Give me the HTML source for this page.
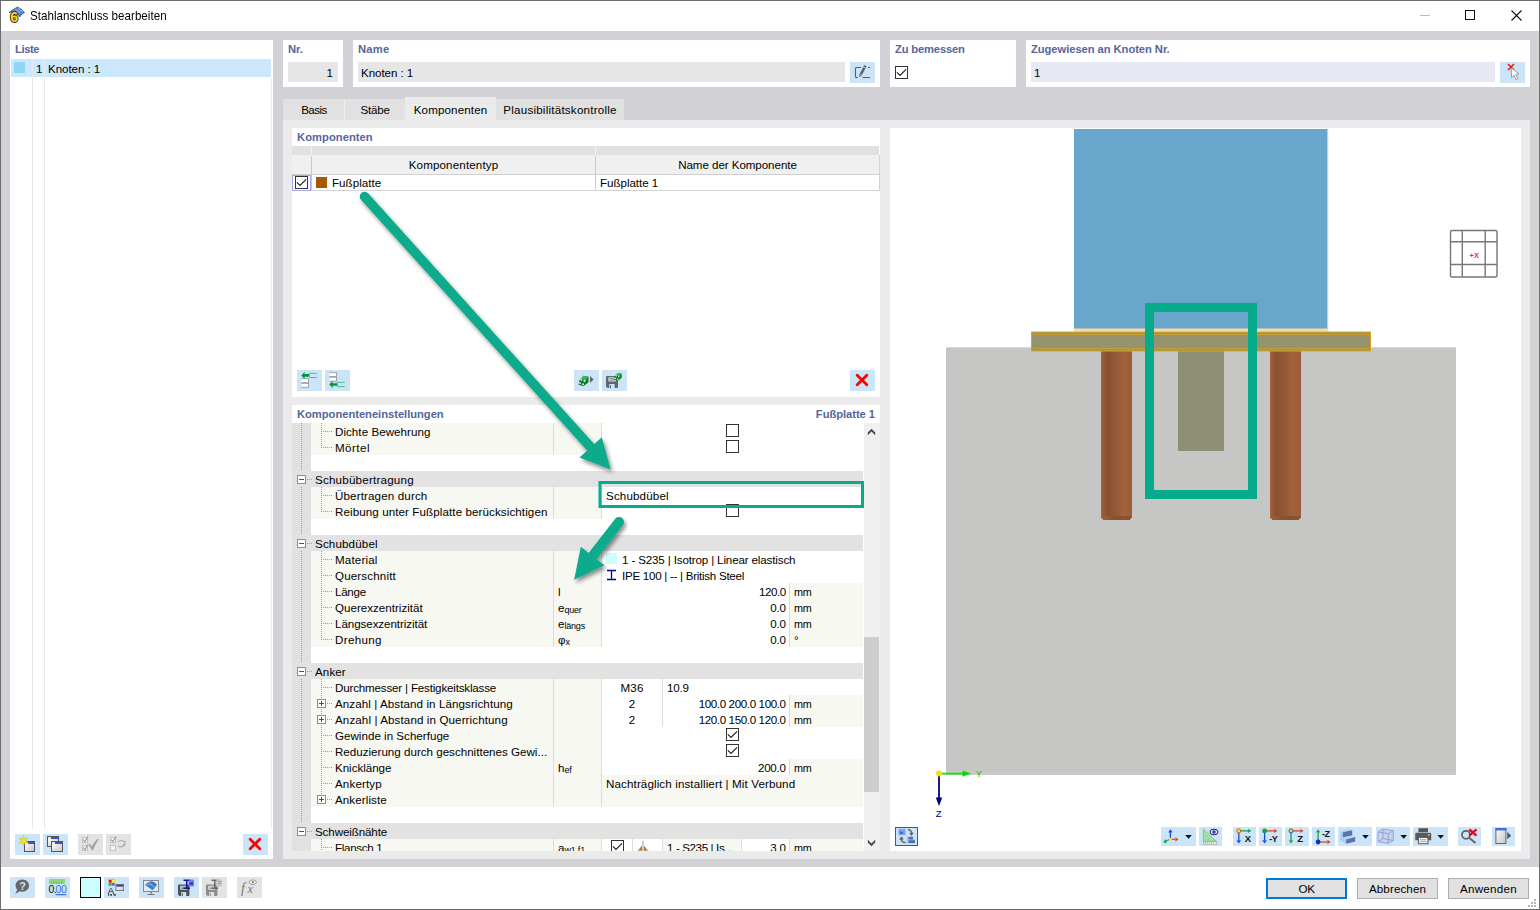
<!DOCTYPE html>
<html lang="de"><head><meta charset="utf-8"><title>Stahlanschluss bearbeiten</title>
<style>
*{box-sizing:border-box;margin:0;padding:0}
html,body{width:1540px;height:910px;overflow:hidden;background:#d1d1d6}
body{position:relative;font-family:"Liberation Sans",sans-serif;font-size:11.6px;color:#000;letter-spacing:0}
.a{position:absolute}
.w{background:#fff}
.lbl{position:absolute;font-weight:bold;color:#53669a;font-size:11.2px;letter-spacing:0;white-space:nowrap;line-height:14px}
.t{position:absolute;white-space:nowrap;line-height:16px;height:16px;margin-top:1px}
.btn{position:absolute;background:#cce4f7}
.btn.dis{background:#e3e3e3}
.cb{position:absolute;width:13px;height:13px;border:1px solid #333;background:#fff}
.cb svg{position:absolute;left:0;top:0}
.sec{position:absolute;left:292px;width:571px;height:16px;background:#e2e2e2}
.nm{position:absolute;left:311px;width:242px;height:16px;background:#f8f8f2}
.sy{position:absolute;left:554px;width:47px;height:16px;background:#f8f8f2}
.bg{position:absolute;height:16px;background:#f8f8f2}
.vl{position:absolute;width:1px;background:#dcdcdc}
.hd{position:absolute;height:1px;background:repeating-linear-gradient(to right,#9c9c9c 0 1px,transparent 1px 2px)}
.vd{position:absolute;width:1px;background:repeating-linear-gradient(to bottom,#9c9c9c 0 1px,transparent 1px 2px)}
.pm{position:absolute;width:9px;height:9px;border:1px solid #8c8c8c;background:#fff}
.pm:before{content:"";position:absolute;left:1px;top:3px;width:5px;height:1px;background:#505050}
.pm.plus:after{content:"";position:absolute;left:3px;top:1px;width:1px;height:5px;background:#505050}
sub{font-size:9px;vertical-align:baseline;position:relative;top:1px;letter-spacing:-0.2px}

</style></head><body>

<div class="a w" style="left:1px;top:1px;width:1538px;height:30px"></div>
<div class="t" style="left:30px;top:7px;transform:scaleY(1.13);transform-origin:0 74%;letter-spacing:0.025px">Stahlanschluss bearbeiten</div>
<svg class="a" style="left:4px;top:4px" width="28" height="24" viewBox="4 4 28 24"><path d="M9 12.6 L12 10.2 L17.5 7 L21 9 L24.6 12.400 L22 14 L19.800 17 L17 13 L13 11.500 Z" fill="#4a80cf" stroke="#3a4a60" stroke-width="0.7"/><path d="M12.500 10.500 L18 13.500 M15 8.800 L20.500 13.500 M18 8 L23 12.500 M14 12 L20 8.500 M16.500 13 L22.500 10" stroke="#9cc8f4" stroke-width="0.600"/><text x="10.300" y="21.800" font-size="14" font-weight="bold" fill="#fcd42a" stroke="#2c2c24" stroke-width="1.8" stroke-linejoin="round" paint-order="stroke" font-family="Liberation Sans, sans-serif">6</text></svg>
<div class="a" style="left:1420px;top:15px;width:10px;height:1px;background:#bdbdbd"></div>
<div class="a" style="left:1465px;top:10px;width:10px;height:10px;border:1px solid #111"></div>
<svg class="a" style="left:1510px;top:9px" width="13" height="13" viewBox="0 0 13 13"><path d="M1.5 1.5 L11.5 11.5 M11.5 1.5 L1.5 11.5" stroke="#111" stroke-width="1.1" fill="none"/></svg>
<div class="a w" style="left:10px;top:40px;width:263px;height:819px"></div>
<div class="lbl" style="left:15px;top:42px;letter-spacing:-0.381px">Liste</div>
<div class="a" style="left:11px;top:59px;width:260px;height:18px;background:#cce8ff"></div>
<div class="a" style="left:14px;top:62px;width:11px;height:11px;background:#90d6f2"></div>
<div class="vl" style="left:32px;top:77px;height:752px;background:#e6e6e6"></div>
<div class="vl" style="left:44px;top:77px;height:752px;background:#e6e6e6"></div>
<div class="vl" style="left:32px;top:59px;height:18px;background:#e6e9ec"></div>
<div class="vl" style="left:44px;top:59px;height:18px;background:#e6e9ec"></div>
<div class="vl" style="left:271px;top:77px;height:752px;background:#ececec"></div>
<div class="t" style="left:36px;top:60px">1</div>
<div class="t" style="left:48px;top:60px;letter-spacing:-0.073px">Knoten : 1</div>
<div class="btn" style="left:15px;top:834px;width:25px;height:21px"></div>
<svg class="a" style="left:15px;top:834px" width="25" height="21" viewBox="0 0 25 21"><defs><linearGradient id="wg" x1="0" y1="0" x2="1" y2="1"><stop offset="0" stop-color="#fff"/><stop offset="1" stop-color="#c8c8c8"/></linearGradient></defs><rect x="9" y="7" width="11" height="11" fill="#555"/><rect x="10" y="8" width="9" height="9" fill="url(#wg)"/><rect x="10" y="8" width="9" height="2" fill="#2f55d4"/><rect x="10" y="8" width="3" height="2" fill="#e8e8e8"/><path d="M8.5 1.5 L9.6 5 L13 3.8 L10.8 6.7 L13.5 9 L10 8.6 L8.5 12 L7.6 8.6 L4 9.5 L6.5 6.7 L4 4 L7.4 5 Z" fill="#f5e616" stroke="#c8b400" stroke-width="0.4"/></svg>
<div class="btn" style="left:43px;top:834px;width:25px;height:21px"></div>
<svg class="a" style="left:43px;top:834px" width="25" height="21" viewBox="0 0 25 21"><defs><linearGradient id="wg" x1="0" y1="0" x2="1" y2="1"><stop offset="0" stop-color="#fff"/><stop offset="1" stop-color="#c8c8c8"/></linearGradient></defs><rect x="4" y="2" width="12" height="11" fill="#555"/><rect x="5" y="3" width="10" height="9" fill="url(#wg)"/><rect x="5" y="3" width="10" height="2" fill="#2f55d4"/><rect x="5" y="3" width="3" height="2" fill="#e8e8e8"/><rect x="8" y="7" width="12" height="11" fill="#555"/><rect x="9" y="8" width="10" height="9" fill="url(#wg)"/><rect x="9" y="8" width="10" height="2" fill="#2f55d4"/><rect x="9" y="8" width="3" height="2" fill="#e8e8e8"/></svg>
<div class="btn dis" style="left:78px;top:834px;width:25px;height:21px"></div>
<svg class="a" style="left:78px;top:834px" width="25" height="21" viewBox="0 0 25 21"><rect x="4.5" y="3.5" width="5" height="5" fill="#f4f4f4" stroke="#c4c4c4" stroke-width="1"/><path d="M5 5.5 L6.8 7.6 L10.2 2.5" stroke="#9a9a9a" stroke-width="1.1" fill="none"/><rect x="4.5" y="11.5" width="5" height="5" fill="#f4f4f4" stroke="#c4c4c4" stroke-width="1"/><path d="M5 13.5 L6.8 15.6 L10.2 10.5" stroke="#9a9a9a" stroke-width="1.1" fill="none"/><path d="M11.2 10.5 Q13 11.500 14 13.5 Q16 9 19.8 5.500 Q16.500 10.5 14.500 16 Q13 12.500 11.200 10.500Z" fill="#a4a4a4" stroke="#a4a4a4" stroke-width="1.3" stroke-linejoin="round"/></svg>
<div class="btn dis" style="left:106px;top:834px;width:25px;height:21px"></div>
<svg class="a" style="left:106px;top:834px" width="25" height="21" viewBox="0 0 25 21"><rect x="4.5" y="3.5" width="5" height="5" fill="#f4f4f4" stroke="#c4c4c4" stroke-width="1"/><path d="M5 5.5 L6.8 7.6 L10.2 2.5" stroke="#9a9a9a" stroke-width="1.1" fill="none"/><rect x="4.5" y="11.5" width="5" height="5" fill="#f4f4f4" stroke="#c4c4c4" stroke-width="1"/><path d="M11.5 8 Q15 5.5 18.5 7.5 M19 7 L19 9.5 M12 12 Q15.5 14 19 11 M19.5 10 L16.8 10.6" stroke="#b0b0b0" stroke-width="1.3" fill="none"/></svg>
<div class="btn" style="left:243px;top:834px;width:25px;height:21px"></div>
<svg class="a" style="left:243px;top:834px" width="25" height="21" viewBox="0 0 25 21"><path d="M7.2 5.2 L16.8 14.7 M16.8 5.2 L7.2 14.7" stroke="#f00" stroke-width="2.8" stroke-linecap="round" fill="none"/></svg>
<div class="a w" style="left:283px;top:40px;width:60px;height:47px"></div>
<div class="lbl" style="left:288px;top:42px;letter-spacing:0.006px">Nr.</div>
<div class="a" style="left:288px;top:62px;width:50px;height:20px;background:#e6e6e6"></div>
<div class="t" style="left:288px;top:64px;width:45px;text-align:right">1</div>
<div class="a w" style="left:353px;top:40px;width:527px;height:47px"></div>
<div class="lbl" style="left:358px;top:42px;letter-spacing:0.239px">Name</div>
<div class="a" style="left:358px;top:62px;width:487px;height:20px;background:#e6e6e6"></div>
<div class="t" style="left:361px;top:64px;letter-spacing:-0.073px">Knoten : 1</div>
<div class="btn" style="left:850px;top:62px;width:25px;height:21px"></div>
<svg class="a" style="left:850px;top:62px" width="25" height="21" viewBox="0 0 25 21"><path d="M11 5.5 H6.5 Q5.5 5.5 5.5 6.5 V14.5 Q5.5 15.5 6.5 15.5 H8 M12.5 15.5 H20 M18 5.5 H20" stroke="#5c5c5c" stroke-width="1.1" fill="none"/><path d="M14.2 3 L16.6 4.2 L11.6 13.6 L9.4 15 L9.4 12.4 Z" fill="#606060"/><path d="M13.2 4.9 L15.6 6.1" stroke="#cce4f7" stroke-width="0.8"/><path d="M9.7 12 L11.9 13.2" stroke="#cce4f7" stroke-width="0.7"/></svg>
<div class="a w" style="left:890px;top:40px;width:126px;height:47px"></div>
<div class="lbl" style="left:895px;top:42px;letter-spacing:-0.157px">Zu bemessen</div>
<div class="a w" style="left:1026px;top:40px;width:504px;height:47px"></div>
<div class="lbl" style="left:1031px;top:42px;letter-spacing:-0.051px">Zugewiesen an Knoten Nr.</div>
<div class="a" style="left:1031px;top:62px;width:464px;height:20px;background:#e6e8f3"></div>
<div class="t" style="left:1034px;top:64px">1</div>
<div class="btn" style="left:1500px;top:62px;width:25px;height:21px"></div>
<svg class="a" style="left:1500px;top:62px" width="25" height="21" viewBox="0 0 25 21"><path d="M8 2 L14 8 M14 2 L8 8" stroke="#f00" stroke-width="1.4" fill="none"/><path d="M11.2 5.8 L11.6 15.6 L13.8 13.2 L16 17.6 L18 16.6 L15.8 12.4 L18.8 11.8 Z" fill="#fff" stroke="#888" stroke-width="0.8"/></svg>
<div class="a" style="left:283px;top:99px;width:341px;height:21px;background:#e1e1e1"></div>
<div class="a" style="left:283px;top:120px;width:1247px;height:739px;background:#ebebeb"></div>
<div class="a" style="left:405px;top:97px;width:91px;height:24px;background:#ebebeb"></div>
<div class="vl" style="left:344px;top:99px;height:21px;background:#ededed"></div>
<div class="t" style="left:283px;top:101px;width:62px;text-align:center;letter-spacing:-0.540px">Basis</div>
<div class="t" style="left:345px;top:101px;width:60px;text-align:center;letter-spacing:-0.216px">Stäbe</div>
<div class="t" style="left:405px;top:101px;width:91px;text-align:center;letter-spacing:0.125px">Komponenten</div>
<div class="t" style="left:496px;top:101px;width:128px;text-align:center;letter-spacing:0.224px">Plausibilitätskontrolle</div>
<div class="a w" style="left:292px;top:128px;width:588px;height:269px"></div>
<div class="lbl" style="left:297px;top:130px;letter-spacing:0.050px">Komponenten</div>
<div class="a" style="left:292px;top:146px;width:587px;height:9px;background:#e1e1e1"></div>
<div class="a" style="left:292px;top:155px;width:587px;height:20px;background:#f0f0f0;border-bottom:1px solid #d0d0d0"></div>
<div class="vl" style="left:311px;top:146px;height:9px;background:#f0f0f0"></div>
<div class="vl" style="left:595px;top:146px;height:9px;background:#f0f0f0"></div>
<div class="vl" style="left:311px;top:156px;height:34px;background:#cacaca"></div>
<div class="vl" style="left:595px;top:156px;height:34px;background:#cacaca"></div>
<div class="vl" style="left:879px;top:155px;height:35px;background:#d4d4d4"></div>
<div class="a" style="left:292px;top:190px;width:588px;height:1px;background:#d4d4d4"></div>
<div class="t" style="left:312px;top:156px;width:283px;text-align:center;letter-spacing:0.137px">Komponententyp</div>
<div class="t" style="left:596px;top:156px;width:283px;text-align:center;letter-spacing:-0.065px">Name der Komponente</div>
<div class="a" style="left:292px;top:175px;width:19px;height:16px;border:1px solid #a4a4f0;background:#fff"></div>
<div class="a" style="left:316px;top:177px;width:11px;height:11px;background:#a55a00"></div>
<div class="t" style="left:332px;top:174px;letter-spacing:0.027px">Fußplatte</div>
<div class="t" style="left:600px;top:174px;letter-spacing:-0.046px">Fußplatte 1</div>
<div class="btn" style="left:297px;top:370px;width:25px;height:21px"></div>
<svg class="a" style="left:297px;top:370px" width="25" height="21" viewBox="0 0 25 21"><rect x="4.3" y="8.7" width="7" height="8.6" fill="#fff"/><path d="M4.3 8.7 H11.5 V17.299999999999997 H4.3" stroke="#9a9fa8" stroke-width="1" fill="none"/><path d="M4.3 13.0 H11.5" stroke="#9a9fa8" stroke-width="1.7" fill="none"/><path d="M4.3 5.4 L7.6 2.0000000000000004 V4.1000000000000005 H12 V6.7 H7.6 V8.8 Z" fill="#009640"/><path d="M19.8 3.3000000000000003 H12.4 V7.5 H19.8" stroke="#4db582" stroke-width="0.9" fill="none"/></svg>
<div class="btn" style="left:325px;top:370px;width:25px;height:21px"></div>
<svg class="a" style="left:325px;top:370px" width="25" height="21" viewBox="0 0 25 21"><rect x="4.3" y="2.6" width="7" height="8.6" fill="#fff"/><path d="M4.3 2.6 H11.5 V11.2 H4.3" stroke="#9a9fa8" stroke-width="1" fill="none"/><path d="M4.3 6.9 H11.5" stroke="#9a9fa8" stroke-width="1.7" fill="none"/><path d="M4.3 14.5 L7.6 11.1 V13.2 H12 V15.8 H7.6 V17.9 Z" fill="#009640"/><path d="M19.8 12.4 H12.4 V16.6 H19.8" stroke="#4db582" stroke-width="0.9" fill="none"/></svg>
<div class="btn" style="left:574px;top:370px;width:25px;height:21px"></div>
<svg class="a" style="left:574px;top:370px" width="25" height="21" viewBox="0 0 25 21"><g transform="translate(3.5,4.3)"><path d="M2 6 L6 1.5 L11 2.5 L11 8 L6 12 L1 10.5 Z" fill="#0f7a30"/><path d="M2.5 5.5 L6 1.5 L11 2.5 L8 5.5 Z" fill="#37b85a"/><circle cx="4" cy="5.6" r="1.1" fill="#b5f0c0"/><circle cx="7" cy="6.4" r="1.2" fill="#b5f0c0"/><circle cx="2.5" cy="9" r="1" fill="#b5f0c0"/><circle cx="5.5" cy="10" r="1.1" fill="#b5f0c0"/><circle cx="5.3" cy="5.8" r="0.7" fill="#0a3014"/></g><path d="M16 6 L19.6 9.5 L16 13 Z" fill="#666"/></svg>
<div class="btn" style="left:602px;top:370px;width:25px;height:21px"></div>
<svg class="a" style="left:602px;top:370px" width="25" height="21" viewBox="0 0 25 21"><g transform="translate(4,6) scale(1.0)"><path d="M0 1 Q0 0 1 0 H10.6 L12 1.4 V11 Q12 12 11 12 H1.6 L0 10.4 Z" fill="#666"/><rect x="2.4" y="1.2" width="7.4" height="4.4" rx="0.8" fill="#cce4f7"/><path d="M3.6 2.7 H8.6 M3.6 4.1 H8.6" stroke="#666" stroke-width="0.7"/><rect x="3.2" y="8" width="5.4" height="4.2" fill="#cce4f7"/><rect x="4" y="9" width="1" height="3.2" fill="#666"/></g><g transform="translate(11.5,1.8) scale(0.75)"><path d="M2 6 L6 1.5 L11 2.5 L11 8 L6 12 L1 10.5 Z" fill="#0f7a30"/><path d="M2.5 5.5 L6 1.5 L11 2.5 L8 5.5 Z" fill="#37b85a"/><circle cx="4" cy="5.6" r="1.1" fill="#b5f0c0"/><circle cx="7" cy="6.4" r="1.2" fill="#b5f0c0"/><circle cx="2.5" cy="9" r="1" fill="#b5f0c0"/><circle cx="5.5" cy="10" r="1.1" fill="#b5f0c0"/><circle cx="5.3" cy="5.8" r="0.7" fill="#0a3014"/></g></svg>
<div class="btn" style="left:850px;top:370px;width:25px;height:21px"></div>
<svg class="a" style="left:850px;top:370px" width="25" height="21" viewBox="0 0 25 21"><path d="M7.2 5.2 L16.8 14.7 M16.8 5.2 L7.2 14.7" stroke="#f00" stroke-width="2.8" stroke-linecap="round" fill="none"/></svg>
<div class="a w" style="left:292px;top:405px;width:588px;height:446px"></div>
<div class="lbl" style="left:297px;top:407px;letter-spacing:-0.027px">Komponenteneinstellungen</div>
<div class="lbl" style="left:775px;top:407px;width:100px;text-align:right;letter-spacing:-0.047px">Fußplatte 1</div>
<div class="a" id="tree" style="left:0;top:0;width:880px;height:851px;overflow:hidden">
<div class="a" style="left:292px;top:423px;width:19px;height:428px;background:#e1e1e1"></div>
<div class="vd" style="left:301px;top:423px;height:404px"></div>
<div class="nm" style="top:423px"></div><div class="sy" style="top:423px"></div>
<div class="vl" style="left:553px;top:423px;height:16px"></div>
<div class="vl" style="left:601px;top:423px;height:16px"></div>
<div class="vd" style="left:321px;top:423px;height:16px"></div>
<div class="hd" style="left:323px;top:431px;width:9px"></div>
<div class="t" style="left:335px;top:423px;letter-spacing:0.043px">Dichte Bewehrung</div>
<div class="cb" style="left:726px;top:424px"></div>
<div class="nm" style="top:439px"></div><div class="sy" style="top:439px"></div>
<div class="vl" style="left:553px;top:439px;height:16px"></div>
<div class="vl" style="left:601px;top:439px;height:16px"></div>
<div class="vd" style="left:321px;top:439px;height:9px"></div>
<div class="hd" style="left:323px;top:447px;width:9px"></div>
<div class="t" style="left:335px;top:439px;letter-spacing:0.456px">Mörtel</div>
<div class="cb" style="left:726px;top:440px"></div>
<div class="sec" style="top:471px"></div>
<div class="pm" style="left:297px;top:475px"></div>
<div class="hd" style="left:307px;top:479px;width:5px"></div>
<div class="t" style="left:315px;top:471px;letter-spacing:0.213px">Schubübertragung</div>
<div class="nm" style="top:487px"></div><div class="sy" style="top:487px"></div>
<div class="vl" style="left:553px;top:487px;height:16px"></div>
<div class="vl" style="left:601px;top:487px;height:16px"></div>
<div class="vd" style="left:321px;top:487px;height:16px"></div>
<div class="hd" style="left:323px;top:495px;width:9px"></div>
<div class="t" style="left:335px;top:487px;letter-spacing:0.138px">Übertragen durch</div>
<div class="t" style="left:606px;top:487px;letter-spacing:0.150px">Schubdübel</div>
<div class="nm" style="top:503px"></div><div class="sy" style="top:503px"></div>
<div class="vl" style="left:553px;top:503px;height:16px"></div>
<div class="vl" style="left:601px;top:503px;height:16px"></div>
<div class="vd" style="left:321px;top:503px;height:9px"></div>
<div class="hd" style="left:323px;top:511px;width:9px"></div>
<div class="t" style="left:335px;top:503px;letter-spacing:0.094px">Reibung unter Fußplatte berücksichtigen</div>
<div class="cb" style="left:726px;top:504px"></div>
<div class="sec" style="top:535px"></div>
<div class="pm" style="left:297px;top:539px"></div>
<div class="hd" style="left:307px;top:543px;width:5px"></div>
<div class="t" style="left:315px;top:535px;letter-spacing:0.150px">Schubdübel</div>
<div class="nm" style="top:551px"></div><div class="sy" style="top:551px"></div>
<div class="vl" style="left:553px;top:551px;height:16px"></div>
<div class="vl" style="left:601px;top:551px;height:16px"></div>
<div class="vd" style="left:321px;top:551px;height:16px"></div>
<div class="hd" style="left:323px;top:559px;width:9px"></div>
<div class="t" style="left:335px;top:551px;letter-spacing:0.164px">Material</div>
<div class="a" style="left:606px;top:553px;width:11px;height:11px;background:#ccffff"></div>
<div class="t" style="left:622px;top:551px;letter-spacing:-0.146px">1 - S235 | Isotrop | Linear elastisch</div>
<div class="nm" style="top:567px"></div><div class="sy" style="top:567px"></div>
<div class="vl" style="left:553px;top:567px;height:16px"></div>
<div class="vl" style="left:601px;top:567px;height:16px"></div>
<div class="vd" style="left:321px;top:567px;height:16px"></div>
<div class="hd" style="left:323px;top:575px;width:9px"></div>
<div class="t" style="left:335px;top:567px;letter-spacing:0.150px">Querschnitt</div>
<svg class="a" style="left:606px;top:569px" width="11" height="12" viewBox="0 0 11 12"><path d="M1 1.5 H10 M1 10.5 H10 M5.5 1.5 V10.5" stroke="#000080" stroke-width="1.3" fill="none"/></svg>
<div class="t" style="left:622px;top:567px;letter-spacing:-0.276px">IPE 100 | -- | British Steel</div>
<div class="nm" style="top:583px"></div><div class="sy" style="top:583px"></div>
<div class="vl" style="left:553px;top:583px;height:16px"></div>
<div class="vl" style="left:601px;top:583px;height:16px"></div>
<div class="vd" style="left:321px;top:583px;height:16px"></div>
<div class="hd" style="left:323px;top:591px;width:9px"></div>
<div class="t" style="left:335px;top:583px;letter-spacing:-0.263px">Länge</div>
<div class="t" style="left:558px;top:583px">l</div>
<div class="bg" style="left:790px;top:583px;width:73px"></div>
<div class="vl" style="left:789px;top:583px;height:16px"></div>
<div class="t n" style="left:602px;top:583px;width:183.7px;text-align:right;letter-spacing:-0.479px">120.0</div>
<div class="t" style="left:794px;top:583px;font-size:10.8px;word-spacing:0;letter-spacing:-0.35px"><span>mm</span></div>
<div class="nm" style="top:599px"></div><div class="sy" style="top:599px"></div>
<div class="vl" style="left:553px;top:599px;height:16px"></div>
<div class="vl" style="left:601px;top:599px;height:16px"></div>
<div class="vd" style="left:321px;top:599px;height:16px"></div>
<div class="hd" style="left:323px;top:607px;width:9px"></div>
<div class="t" style="left:335px;top:599px;letter-spacing:0.004px">Querexzentrizität</div>
<div class="t" style="left:558px;top:599px">e<sub>quer</sub></div>
<div class="bg" style="left:790px;top:599px;width:73px"></div>
<div class="vl" style="left:789px;top:599px;height:16px"></div>
<div class="t n" style="left:602px;top:599px;width:183.7px;text-align:right;letter-spacing:-0.213px">0.0</div>
<div class="t" style="left:794px;top:599px;font-size:10.8px;word-spacing:0;letter-spacing:-0.35px"><span>mm</span></div>
<div class="nm" style="top:615px"></div><div class="sy" style="top:615px"></div>
<div class="vl" style="left:553px;top:615px;height:16px"></div>
<div class="vl" style="left:601px;top:615px;height:16px"></div>
<div class="vd" style="left:321px;top:615px;height:16px"></div>
<div class="hd" style="left:323px;top:623px;width:9px"></div>
<div class="t" style="left:335px;top:615px;letter-spacing:-0.068px">Längsexzentrizität</div>
<div class="t" style="left:558px;top:615px">e<sub>längs</sub></div>
<div class="bg" style="left:790px;top:615px;width:73px"></div>
<div class="vl" style="left:789px;top:615px;height:16px"></div>
<div class="t n" style="left:602px;top:615px;width:183.7px;text-align:right;letter-spacing:-0.213px">0.0</div>
<div class="t" style="left:794px;top:615px;font-size:10.8px;word-spacing:0;letter-spacing:-0.35px"><span>mm</span></div>
<div class="nm" style="top:631px"></div><div class="sy" style="top:631px"></div>
<div class="vl" style="left:553px;top:631px;height:16px"></div>
<div class="vl" style="left:601px;top:631px;height:16px"></div>
<div class="vd" style="left:321px;top:631px;height:9px"></div>
<div class="hd" style="left:323px;top:639px;width:9px"></div>
<div class="t" style="left:335px;top:631px;letter-spacing:0.336px">Drehung</div>
<div class="t" style="left:558px;top:631px">φ<sub>x</sub></div>
<div class="bg" style="left:790px;top:631px;width:73px"></div>
<div class="vl" style="left:789px;top:631px;height:16px"></div>
<div class="t n" style="left:602px;top:631px;width:183.7px;text-align:right;letter-spacing:-0.213px">0.0</div>
<div class="t" style="left:794px;top:631px">°</div>
<div class="sec" style="top:663px"></div>
<div class="pm" style="left:297px;top:667px"></div>
<div class="hd" style="left:307px;top:671px;width:5px"></div>
<div class="t" style="left:315px;top:663px;letter-spacing:0.101px">Anker</div>
<div class="nm" style="top:679px"></div><div class="sy" style="top:679px"></div>
<div class="vl" style="left:553px;top:679px;height:16px"></div>
<div class="vl" style="left:601px;top:679px;height:16px"></div>
<div class="vd" style="left:321px;top:679px;height:16px"></div>
<div class="hd" style="left:323px;top:687px;width:9px"></div>
<div class="t" style="left:335px;top:679px;letter-spacing:-0.179px">Durchmesser | Festigkeitsklasse</div>
<div class="vl" style="left:662px;top:679px;height:48px"></div>
<div class="t" style="left:602px;top:679px;width:60px;text-align:center;letter-spacing:0.219px">M36</div>
<div class="t" style="left:667px;top:679px;letter-spacing:-0.226px">10.9</div>
<div class="nm" style="top:695px"></div><div class="sy" style="top:695px"></div>
<div class="vl" style="left:553px;top:695px;height:16px"></div>
<div class="vl" style="left:601px;top:695px;height:16px"></div>
<div class="vd" style="left:321px;top:695px;height:16px"></div>
<div class="pm plus" style="left:317px;top:699px"></div>
<div class="hd" style="left:327px;top:703px;width:5px"></div>
<div class="t" style="left:335px;top:695px;letter-spacing:0.081px">Anzahl | Abstand in Längsrichtung</div>
<div class="bg" style="left:790px;top:695px;width:73px"></div>
<div class="vl" style="left:789px;top:695px;height:16px"></div>
<div class="t n" style="left:602px;top:695px;width:183.7px;text-align:right;letter-spacing:-0.380px">100.0 200.0 100.0</div>
<div class="t" style="left:794px;top:695px;font-size:10.8px;word-spacing:0;letter-spacing:-0.35px"><span>mm</span></div>
<div class="t" style="left:602px;top:695px;width:60px;text-align:center">2</div>
<div class="nm" style="top:711px"></div><div class="sy" style="top:711px"></div>
<div class="vl" style="left:553px;top:711px;height:16px"></div>
<div class="vl" style="left:601px;top:711px;height:16px"></div>
<div class="vd" style="left:321px;top:711px;height:16px"></div>
<div class="pm plus" style="left:317px;top:715px"></div>
<div class="hd" style="left:327px;top:719px;width:5px"></div>
<div class="t" style="left:335px;top:711px;letter-spacing:0.107px">Anzahl | Abstand in Querrichtung</div>
<div class="bg" style="left:790px;top:711px;width:73px"></div>
<div class="vl" style="left:789px;top:711px;height:16px"></div>
<div class="t n" style="left:602px;top:711px;width:183.7px;text-align:right;letter-spacing:-0.380px">120.0 150.0 120.0</div>
<div class="t" style="left:794px;top:711px;font-size:10.8px;word-spacing:0;letter-spacing:-0.35px"><span>mm</span></div>
<div class="t" style="left:602px;top:711px;width:60px;text-align:center">2</div>
<div class="nm" style="top:727px"></div><div class="sy" style="top:727px"></div>
<div class="vl" style="left:553px;top:727px;height:16px"></div>
<div class="vl" style="left:601px;top:727px;height:16px"></div>
<div class="vd" style="left:321px;top:727px;height:16px"></div>
<div class="hd" style="left:323px;top:735px;width:9px"></div>
<div class="t" style="left:335px;top:727px;letter-spacing:0.012px">Gewinde in Scherfuge</div>
<div class="cb" style="left:726px;top:728px"><svg width="11" height="11" viewBox="0 0 11 11"><path d="M0.9 5.3 L4 8.4 L10.1 2.3" stroke="#222" stroke-width="1.2" fill="none"/></svg></div>
<div class="nm" style="top:743px"></div><div class="sy" style="top:743px"></div>
<div class="vl" style="left:553px;top:743px;height:16px"></div>
<div class="vl" style="left:601px;top:743px;height:16px"></div>
<div class="vd" style="left:321px;top:743px;height:16px"></div>
<div class="hd" style="left:323px;top:751px;width:9px"></div>
<div class="t" style="left:335px;top:743px;letter-spacing:0.002px">Reduzierung durch geschnittenes Gewi...</div>
<div class="cb" style="left:726px;top:744px"><svg width="11" height="11" viewBox="0 0 11 11"><path d="M0.9 5.3 L4 8.4 L10.1 2.3" stroke="#222" stroke-width="1.2" fill="none"/></svg></div>
<div class="nm" style="top:759px"></div><div class="sy" style="top:759px"></div>
<div class="vl" style="left:553px;top:759px;height:16px"></div>
<div class="vl" style="left:601px;top:759px;height:16px"></div>
<div class="vd" style="left:321px;top:759px;height:16px"></div>
<div class="hd" style="left:323px;top:767px;width:9px"></div>
<div class="t" style="left:335px;top:759px;letter-spacing:-0.035px">Knicklänge</div>
<div class="t" style="left:558px;top:759px">h<sub>ef</sub></div>
<div class="bg" style="left:790px;top:759px;width:73px"></div>
<div class="vl" style="left:789px;top:759px;height:16px"></div>
<div class="t n" style="left:602px;top:759px;width:183.7px;text-align:right;letter-spacing:-0.254px">200.0</div>
<div class="t" style="left:794px;top:759px;font-size:10.8px;word-spacing:0;letter-spacing:-0.35px"><span>mm</span></div>
<div class="nm" style="top:775px"></div><div class="sy" style="top:775px"></div>
<div class="vl" style="left:553px;top:775px;height:16px"></div>
<div class="vl" style="left:601px;top:775px;height:16px"></div>
<div class="vd" style="left:321px;top:775px;height:16px"></div>
<div class="hd" style="left:323px;top:783px;width:9px"></div>
<div class="t" style="left:335px;top:775px;letter-spacing:0.133px">Ankertyp</div>
<div class="bg" style="left:602px;top:775px;width:261px;height:32px"></div>
<div class="t" style="left:606px;top:775px;letter-spacing:0.118px">Nachträglich installiert | Mit Verbund</div>
<div class="nm" style="top:791px"></div><div class="sy" style="top:791px"></div>
<div class="vl" style="left:553px;top:791px;height:16px"></div>
<div class="vl" style="left:601px;top:791px;height:16px"></div>
<div class="vd" style="left:321px;top:791px;height:9px"></div>
<div class="pm plus" style="left:317px;top:795px"></div>
<div class="hd" style="left:327px;top:799px;width:5px"></div>
<div class="t" style="left:335px;top:791px;letter-spacing:0.088px">Ankerliste</div>
<div class="sec" style="top:823px"></div>
<div class="pm" style="left:297px;top:827px"></div>
<div class="hd" style="left:307px;top:831px;width:5px"></div>
<div class="t" style="left:315px;top:823px;letter-spacing:-0.115px">Schweißnähte</div>
<div class="nm" style="top:839px"></div><div class="sy" style="top:839px"></div>
<div class="vl" style="left:553px;top:839px;height:16px"></div>
<div class="vl" style="left:601px;top:839px;height:16px"></div>
<div class="vd" style="left:321px;top:839px;height:16px"></div>
<div class="hd" style="left:323px;top:847px;width:9px"></div>
<div class="t" style="left:335px;top:839px;letter-spacing:-0.321px">Flansch 1</div>
<div class="t" style="left:558px;top:839px">a<sub>w1,f1</sub></div>
<div class="vl" style="left:632px;top:839px;height:16px"></div>
<div class="vl" style="left:662px;top:839px;height:16px"></div>
<div class="bg" style="left:663px;top:839px;width:78px"></div>
<div class="vl" style="left:741px;top:839px;height:16px"></div>
<div class="cb" style="left:611px;top:840px"><svg width="11" height="11" viewBox="0 0 11 11"><path d="M0.9 5.3 L4 8.4 L10.1 2.3" stroke="#222" stroke-width="1.2" fill="none"/></svg></div>
<svg class="a" style="left:637px;top:840px" width="13" height="14" viewBox="0 0 13 14"><path d="M6 0.800 V11" stroke="#b4caf0" stroke-width="1.8"/><path d="M0.600 11 L5 5.600 V11 Z M11 11 L7 5.600 V11 Z" fill="#c8780a"/><path d="M0 11 H12" stroke="#b4caf0" stroke-width="1"/></svg>
<div class="t" style="left:667px;top:839px;letter-spacing:-0.385px">1 - S235 | Is...</div>
<div class="bg" style="left:790px;top:839px;width:73px"></div>
<div class="vl" style="left:789px;top:839px;height:16px"></div>
<div class="t n" style="left:602px;top:839px;width:183.7px;text-align:right;letter-spacing:-0.213px">3.0</div>
<div class="t" style="left:794px;top:839px;font-size:10.8px;word-spacing:0;letter-spacing:-0.35px"><span>mm</span></div>
</div>
<div class="a" style="left:864px;top:423px;width:16px;height:428px;background:#f0f0f0"></div>
<div class="a" style="left:864px;top:637px;width:15px;height:155px;background:#cdcdcd"></div>
<svg class="a" style="left:864px;top:423px" width="16" height="428" viewBox="864 423 16 428"><path d="M871.5 428.7 L875.2 432.4 V435.3 L871.5 431.6 L867.8 435.3 V432.4 Z" fill="#484848"/><path d="M871.5 846.3 L875.2 842.6 V839.7 L871.5 843.400 L867.800 839.700 V842.600 Z" fill="#484848"/></svg>
<div class="cb" style="left:895px;top:66px"><svg width="11" height="11" viewBox="0 0 11 11"><path d="M0.9 5.3 L4 8.4 L10.1 2.3" stroke="#222" stroke-width="1.2" fill="none"/></svg></div>
<div class="cb" style="left:295px;top:176px"><svg width="11" height="11" viewBox="0 0 11 11"><path d="M0.9 5.3 L4 8.4 L10.1 2.3" stroke="#222" stroke-width="1.2" fill="none"/></svg></div>
<div class="a w" style="left:890px;top:128px;width:631px;height:723px"></div>
<svg class="a" style="left:890px;top:128px" width="631" height="723" viewBox="890 128 631 723">
<defs><linearGradient id="an" x1="0" x2="1" y1="0" y2="0"><stop offset="0" stop-color="#a8633a"/><stop offset="0.07" stop-color="#9a5b36"/><stop offset="0.2" stop-color="#865131"/><stop offset="0.5" stop-color="#955a36"/><stop offset="0.75" stop-color="#a3623c"/><stop offset="1" stop-color="#9a5b36"/></linearGradient><linearGradient id="ab" x1="0" x2="1" y1="0" y2="0"><stop offset="0" stop-color="#a35f38"/><stop offset="0.45" stop-color="#87522f"/><stop offset="1" stop-color="#8a5331"/></linearGradient></defs>
<rect x="946" y="347.3" width="510" height="427.7" fill="#c6c6c5"/><rect x="946" y="771" width="510" height="4" fill="#c9c9c8"/>
<rect x="1074" y="129" width="253.3" height="200" fill="#68a6cb"/><rect x="1327.3" y="129" width="0.9" height="202" fill="#bcc6d4"/>
<rect x="1074" y="328.5" width="254" height="3" fill="#fbd7a2"/>
<path d="M1101 351 H1132 V517.3 L1129.5 519.900 H1103.5 L1101 517.300 Z" fill="url(#an)"/><path d="M1101.5 516 H1131.5 L1129.5 519.900 H1103.5 Z" fill="url(#ab)"/>
<path d="M1270 351 H1301 V517.3 L1298.5 519.900 H1272.5 L1270 517.300 Z" fill="url(#an)"/><path d="M1270.5 516 H1300.5 L1298.5 519.900 H1272.5 Z" fill="url(#ab)"/>
<rect x="1178" y="351" width="46" height="100" fill="#8f8f74"/>
<rect x="1031.5" y="332" width="339" height="19" fill="#96946f" stroke="#d9a514" stroke-width="1"/>
<path d="M1033 334.500 H1369 M1033 348.500 H1369" stroke="#c9a22e" stroke-width="1" opacity="0.9"/>
<rect x="1149.5" y="307.500" width="103" height="187" fill="none" stroke="#07ab8b" stroke-width="9"/>
</svg>
<div class="btn" style="left:1161px;top:827px;width:35px;height:19px"></div>
<svg class="a" style="left:1161px;top:827px" width="35" height="19" viewBox="0 0 35 19"><path d="M9.4 11.8 L9.4 5.4" stroke="#1846d8" stroke-width="1.3" fill="none"/><path d="M9.4 2.2 L11.6 5.4 L7.2 5.4 Z" fill="#1846d8"/><path d="M9.4 12.2 L14.4 12.4" stroke="#e04818" stroke-width="1.3" fill="none"/><path d="M17.6 12.6 L14.3 14.6 L14.5 10.2 Z" fill="#e04818"/><path d="M9.4 12.0 L5.1 14.0" stroke="#18a048" stroke-width="1.3" fill="none"/><path d="M2.2 15.4 L4.2 12.0 L6.0 16.0 Z" fill="#18a048"/><circle cx="9.4" cy="12" r="1.6" fill="#f8e020"/><path d="M24.2 8 H30.799999999999997 L27.5 11.8 Z" fill="#111"/></svg>
<div class="btn" style="left:1199px;top:827px;width:23px;height:19px"></div>
<svg class="a" style="left:1199px;top:827px" width="35" height="19" viewBox="0 0 35 19"><path d="M4.4 2 V14.2 H17 Z" fill="#98ee98" stroke="#78b888" stroke-width="0.8"/><path d="M6.8 8.5 V12 H10.5 Z" fill="#cce4f7" stroke="#78b888" stroke-width="0.6"/><rect x="4.400" y="14.600" width="13.400" height="2.600" fill="#eee" stroke="#999" stroke-width="0.600"/><path d="M6.500 15 V16.500 M8.500 15 V16.500 M10.500 15 V16.500 M12.500 15 V16.500 M14.500 15 V16.500" stroke="#888" stroke-width="0.600"/><ellipse cx="15" cy="5" rx="4" ry="2.800" fill="#e8e8ff" stroke="#20206a" stroke-width="1"/><circle cx="15" cy="5" r="1.700" fill="#2a3a9a"/></svg>
<div class="btn" style="left:1232.5px;top:827px;width:23.5px;height:19px"></div>
<svg class="a" style="left:1232.5px;top:827px" width="35" height="19" viewBox="0 0 35 19"><path d="M5.8 3.9 L15.1 3.9" stroke="#18a048" stroke-width="1.3" fill="none"/><path d="M18.3 3.9 L15.1 6.1 L15.1 1.7 Z" fill="#18a048"/><path d="M5.8 3.9 L5.8 13.2" stroke="#1846d8" stroke-width="1.3" fill="none"/><path d="M5.8 16.4 L3.6 13.2 L8.0 13.2 Z" fill="#1846d8"/><circle cx="5.8" cy="3.900" r="2" fill="#f8e020" stroke="#e04818" stroke-width="0.900"/><text x="11.8" y="15.4" font-size="9.5" font-weight="bold" fill="#111" font-family="Liberation Sans, sans-serif" letter-spacing="-0.5">X</text></svg>
<div class="btn" style="left:1259px;top:827px;width:23px;height:19px"></div>
<svg class="a" style="left:1259px;top:827px" width="35" height="19" viewBox="0 0 35 19"><path d="M5.6 3.9 L15.1 3.9" stroke="#e04818" stroke-width="1.3" fill="none"/><path d="M18.3 3.9 L15.1 6.1 L15.1 1.7 Z" fill="#e04818"/><path d="M5.6 3.9 L5.6 13.2" stroke="#1846d8" stroke-width="1.3" fill="none"/><path d="M5.6 16.4 L3.4 13.2 L7.8 13.2 Z" fill="#1846d8"/><circle cx="5.600" cy="3.900" r="2.400" fill="#18a048"/><text x="10.2" y="15.4" font-size="9" font-weight="bold" fill="#111" font-family="Liberation Sans, sans-serif" letter-spacing="-0.5">-Y</text></svg>
<div class="btn" style="left:1285px;top:827px;width:23.5px;height:19px"></div>
<svg class="a" style="left:1285px;top:827px" width="35" height="19" viewBox="0 0 35 19"><path d="M6.0 3.9 L15.3 3.9" stroke="#e04818" stroke-width="1.3" fill="none"/><path d="M18.5 3.9 L15.3 6.1 L15.3 1.7 Z" fill="#e04818"/><path d="M6.0 3.9 L6.0 13.2" stroke="#18a048" stroke-width="1.3" fill="none"/><path d="M6.0 16.4 L3.8 13.2 L8.2 13.2 Z" fill="#18a048"/><circle cx="6" cy="3.900" r="2" fill="#f8e020" stroke="#1846d8" stroke-width="0.900"/><text x="12.3" y="15.4" font-size="9.5" font-weight="bold" fill="#111" font-family="Liberation Sans, sans-serif" letter-spacing="-0.5">Z</text></svg>
<div class="btn" style="left:1311.5px;top:827px;width:23.5px;height:19px"></div>
<svg class="a" style="left:1311.5px;top:827px" width="35" height="19" viewBox="0 0 35 19"><path d="M6.1 15.0 L6.1 5.4" stroke="#18a048" stroke-width="1.3" fill="none"/><path d="M6.1 2.2 L8.3 5.4 L3.9 5.4 Z" fill="#18a048"/><path d="M6.1 15.0 L15.4 15.0" stroke="#e04818" stroke-width="1.3" fill="none"/><path d="M18.6 15.0 L15.4 17.2 L15.4 12.8 Z" fill="#e04818"/><circle cx="6.100" cy="15" r="2.400" fill="#1030c8"/><text x="10" y="10" font-size="9" font-weight="bold" fill="#111" font-family="Liberation Sans, sans-serif" letter-spacing="-0.5">-Z</text></svg>
<div class="btn" style="left:1338px;top:827px;width:34px;height:19px"></div>
<svg class="a" style="left:1338px;top:827px" width="35" height="19" viewBox="0 0 35 19"><path d="M2.1 3.9 L4.9 5.2 V10.4 L8.2 12.4 V16.8 L2.1 13.500 Z" fill="#a9ccf8"/><path d="M2.1 3.9 L11.200 1.700 L14.200 3.100 L4.900 5.200 Z" fill="#b8d6fb"/><path d="M4.900 5.200 L14.200 3.200 V8.500 L4.900 10.500 Z" fill="#5a74a8"/><path d="M4.900 10.500 L14.200 8.500 L17.200 9.900 L8.200 12.400 Z" fill="#b8d6fb"/><path d="M8.200 12.400 L17.200 10.100 V14.600 L8.200 16.800 Z" fill="#5a74a8"/><path d="M24.2 8 H30.799999999999997 L27.5 11.8 Z" fill="#111"/></svg>
<div class="btn" style="left:1375.7px;top:827px;width:34.3px;height:19px"></div>
<svg class="a" style="left:1375.7px;top:827px" width="35" height="19" viewBox="0 0 35 19"><path d="M2 5 L7 2 L17.300 3.600 V13.400 L12.300 16.400 L2 14.600 Z" fill="#c3cdee" opacity="0.8"/><path d="M2 5 L7 2 L17.300 3.600 V13.400 L12.300 16.400 L2 14.600 Z M2 5 L12.300 6.700 V16.400 M12.300 6.700 L17.300 3.600 M7 2 V11.600 L2 14.600 M7 11.600 L17.300 13.400" stroke="#8b8fc4" stroke-width="0.700" fill="none"/><path d="M24.4 8 H31.0 L27.7 11.8 Z" fill="#111"/></svg>
<div class="btn" style="left:1413px;top:827px;width:35px;height:19px"></div>
<svg class="a" style="left:1413px;top:827px" width="35" height="19" viewBox="0 0 35 19"><rect x="5.400" y="1.200" width="9.600" height="4" fill="#555"/><path d="M2.200 7 Q2.200 5.800 3.400 5.800 H17 Q18.200 5.800 18.200 7 V13.200 H2.200 Z" fill="#5a5a5a"/><rect x="15" y="7.300" width="1.600" height="1.300" fill="#ddd"/><rect x="5.400" y="10.400" width="9.600" height="6.300" fill="#f2f2f2" stroke="#5a5a5a" stroke-width="1"/><path d="M7 12.600 H13.400 M7 14.400 H13.400" stroke="#999" stroke-width="0.800"/><path d="M24.4 8 H31.0 L27.7 11.8 Z" fill="#111"/></svg>
<div class="btn" style="left:1458px;top:827px;width:23px;height:19px"></div>
<svg class="a" style="left:1458px;top:827px" width="35" height="19" viewBox="0 0 35 19"><circle cx="8" cy="7.800" r="4" fill="none" stroke="#606060" stroke-width="1.700"/><path d="M11 10.800 L17.500 16" stroke="#606060" stroke-width="1.800"/><path d="M11.300 2.300 L18.500 8.600 M18.500 2.300 L11.300 8.600" stroke="#f00018" stroke-width="2.200"/></svg>
<div class="btn" style="left:1491.7px;top:827px;width:23.3px;height:19px"></div>
<svg class="a" style="left:1491.7px;top:827px" width="35" height="19" viewBox="0 0 35 19"><defs><linearGradient id="pg" x1="0" y1="0" x2="1" y2="1"><stop offset="0" stop-color="#fff"/><stop offset="1" stop-color="#c4c4c4"/></linearGradient></defs><rect x="3.900" y="1.500" width="10" height="15" fill="url(#pg)" stroke="#666" stroke-width="1"/><rect x="3.400" y="1" width="11" height="2.400" fill="#3a6ee8"/><path d="M15.300 5.100 L19.100 8.700 L15.300 12.300 Z" fill="#505050"/></svg>
<div class="btn" style="left:895px;top:827px;width:23px;height:19px;border:1px solid #1c66a8"></div>
<svg class="a" style="left:895px;top:827px" width="23" height="19" viewBox="0 0 23 19"><rect x="3.500" y="2" width="7" height="6" fill="#7aa0f0" stroke="#9dbcf8" stroke-width="0.800"/><path d="M5 7 V3.500 L6.500 5.500 L8 4.500 V7 Z" fill="#3a60d8"/><path d="M13 2.500 Q17 3 16.500 7 M14.800 6 L16.500 8 L18.200 5.500" stroke="#666" stroke-width="1.300" fill="none"/><path d="M10.500 15.500 Q6 15.500 6.500 11.500 M4.800 12.800 L6.300 10.500 L8.300 12.300" stroke="#666" stroke-width="1.300" fill="none"/><path d="M11.500 10.500 L13 9 H18 V12 H20 V15 L18.500 16.500 H11.500 Z" fill="#a9c8f2"/><path d="M13.500 10 H18 V12.500 H13.500 Z M13.500 13.200 H20 V16 H13.500 Z" fill="#4f6fae"/></svg>
<div class="a w" style="left:1px;top:867px;width:1538px;height:42px"></div>
<div class="btn" style="left:10px;top:877px;width:25px;height:21px"></div>
<svg class="a" style="left:10px;top:877px" width="25" height="21" viewBox="0 0 25 21"><path d="M12.3 2.5 C16.3 2.5 19 5.3 19 8.6 C19 12 16.3 14.7 12.3 14.7 C11.4 14.7 10.6 14.6 9.9 14.3 L5.2 17 L7.2 12.8 C6.2 11.7 5.6 10.3 5.6 8.6 C5.6 5.3 8.3 2.5 12.3 2.5Z" fill="#666"/><text x="12.5" y="12.6" font-size="11" font-weight="bold" fill="#cce4f7" text-anchor="middle" font-family="Liberation Sans, sans-serif">?</text></svg>
<div class="btn" style="left:45px;top:877px;width:25px;height:21px"></div>
<svg class="a" style="left:45px;top:877px" width="25" height="21" viewBox="0 0 25 21"><rect x="4" y="2" width="16" height="5" fill="#8fd67d"/><path d="M6.5 4.5 V7 M9 4.5 V7 M11.5 4.5 V7 M14 4.5 V7 M16.500 4.500 V7" stroke="#6dbb5c" stroke-width="0.8"/><text x="3.5" y="16.200" font-size="10.5" fill="#111" font-family="Liberation Sans, sans-serif" letter-spacing="-0.6">0.</text><text x="10.6" y="16.200" font-size="10.5" fill="#3b6fd9" font-family="Liberation Sans, sans-serif" letter-spacing="-0.4" text-decoration="underline">00</text><path d="M10.800 17.500 H20" stroke="#3b6fd9" stroke-width="0.9"/></svg>
<div class="btn" style="left:104px;top:877px;width:25px;height:21px"></div>
<svg class="a" style="left:104px;top:877px" width="25" height="21" viewBox="0 0 25 21"><defs><linearGradient id="wg" x1="0" y1="0" x2="1" y2="1"><stop offset="0" stop-color="#fff"/><stop offset="1" stop-color="#c8c8c8"/></linearGradient></defs><rect x="4" y="2" width="7" height="7" fill="#b9b9b9"/><rect x="5" y="3" width="2.5" height="2.500" fill="#f00"/><rect x="8" y="3" width="2.5" height="2.500" fill="#ff0"/><rect x="5" y="6" width="2.500" height="2.500" fill="#0d0"/><rect x="8" y="6" width="2.5" height="2.500" fill="#46f"/><rect x="11.500" y="7" width="8.5" height="7" fill="#666"/><rect x="12.300" y="7.800" width="7" height="5.400" fill="url(#wg)"/><rect x="12.300" y="7.800" width="7" height="1.800" fill="#2b3fa0"/><text x="3.8" y="16.800" font-size="9.500" fill="#111" font-family="Liberation Sans, sans-serif">A</text><path d="M4 17.800 H5.200 M6.200 17.800 H8 M9.500 17.800 H11.800" stroke="#111" stroke-width="1.200"/></svg>
<div class="btn" style="left:139px;top:877px;width:25px;height:21px"></div>
<svg class="a" style="left:139px;top:877px" width="25" height="21" viewBox="0 0 25 21"><rect x="4.500" y="3.500" width="15" height="11" fill="#dcebf8" stroke="#888" stroke-width="1"/><path d="M6 8 Q9 4.500 13 4.300 Q16 5 18 7.500 Q16 11 13.500 13.300 Q10 10.500 6 8Z" fill="#3f78c8"/><path d="M6.500 8 Q10 6 13.500 9 M9.500 5.400 Q13 6.500 15.500 10.800" stroke="#9cc4f0" stroke-width="0.700" fill="none"/><path d="M12 15 V17.500 M8.500 17.500 H15.500" stroke="#777" stroke-width="1.200"/></svg>
<div class="btn" style="left:174px;top:877px;width:25px;height:21px"></div>
<svg class="a" style="left:174px;top:877px" width="25" height="21" viewBox="0 0 25 21"><g transform="translate(4,7.5) scale(0.95)"><path d="M0 1 Q0 0 1 0 H10.6 L12 1.4 V11 Q12 12 11 12 H1.6 L0 10.4 Z" fill="#505050"/><rect x="2.4" y="1.2" width="7.4" height="4.4" rx="0.8" fill="#cce4f7"/><path d="M3.6 2.7 H8.6 M3.6 4.1 H8.6" stroke="#505050" stroke-width="0.7"/><rect x="3.2" y="8" width="5.4" height="4.2" fill="#cce4f7"/><rect x="4" y="9" width="1" height="3.2" fill="#505050"/></g><path d="M9.5 3.200 H16.0 M9.5 11.200 H16.0 M12.75 3.200 V11.200" stroke="#10109a" stroke-width="1.500" fill="none"/><rect x="14.500" y="2.500" width="5.500" height="7" rx="1" fill="#6a6af0" opacity="0.85"/><rect x="15.500" y="5.500" width="3.500" height="2" fill="#2a2ac8"/></svg>
<div class="btn dis" style="left:202px;top:877px;width:25px;height:21px"></div>
<svg class="a" style="left:202px;top:877px" width="25" height="21" viewBox="0 0 25 21"><g transform="translate(4,7.5) scale(0.95)"><path d="M0 1 Q0 0 1 0 H10.6 L12 1.4 V11 Q12 12 11 12 H1.6 L0 10.4 Z" fill="#8c8c8c"/><rect x="2.4" y="1.2" width="7.4" height="4.4" rx="0.8" fill="#e3e3e3"/><path d="M3.6 2.7 H8.6 M3.6 4.1 H8.6" stroke="#8c8c8c" stroke-width="0.7"/><rect x="3.2" y="8" width="5.4" height="4.2" fill="#e3e3e3"/><rect x="4" y="9" width="1" height="3.2" fill="#8c8c8c"/></g><path d="M9.5 3.200 H16.0 M9.5 11.200 H16.0 M12.75 3.200 V11.200" stroke="#6a6a6a" stroke-width="1.500" fill="none"/><rect x="14.500" y="2.500" width="5.500" height="7" fill="#cfcfcf"/><path d="M14.500 4.500 H20 M14.500 6.500 H20 M17 2.500 V9.500" stroke="#9a9a9a" stroke-width="0.600"/></svg>
<div class="btn dis" style="left:237px;top:877px;width:25px;height:21px"></div>
<svg class="a" style="left:237px;top:877px" width="25" height="21" viewBox="0 0 25 21"><text x="4" y="15.500" font-size="14" font-style="italic" fill="#777" font-family="Liberation Serif, serif">f</text><text x="10.500" y="15.500" font-size="12" font-style="italic" fill="#777" font-family="Liberation Serif, serif">x</text><ellipse cx="15.800" cy="5.200" rx="3.600" ry="2.300" fill="#f4f4f4" stroke="#888" stroke-width="0.800"/><circle cx="15.800" cy="5.200" r="1.100" fill="#777"/></svg>
<div class="a" style="left:80px;top:877px;width:21px;height:21px;background:#ccffff;border:1px solid #000"></div>
<div class="a" style="left:1266px;top:878px;width:81px;height:21px;background:#e1e1e1;border:2px solid #0078d7"></div>
<div class="a" style="left:1357px;top:878px;width:81px;height:21px;background:#e1e1e1;border:1px solid #adadad"></div>
<div class="a" style="left:1448px;top:878px;width:81px;height:21px;background:#e1e1e1;border:1px solid #adadad"></div>
<div class="t" style="left:1266px;top:880px;width:81px;text-align:center;letter-spacing:-0.366px">OK</div>
<div class="t" style="left:1357px;top:880px;width:81px;text-align:center;letter-spacing:0.103px">Abbrechen</div>
<div class="t" style="left:1448px;top:880px;width:81px;text-align:center;letter-spacing:0.300px">Anwenden</div>
<svg class="a" style="left:1526px;top:897px" width="11" height="11" viewBox="0 0 11 11"><g fill="#b8b8b8"><rect x="8" y="2" width="2" height="2"/><rect x="5" y="5" width="2" height="2"/><rect x="8" y="5" width="2" height="2"/><rect x="2" y="8" width="2" height="2"/><rect x="5" y="8" width="2" height="2"/><rect x="8" y="8" width="2" height="2"/></g></svg>
<div class="a" style="left:0;top:0;width:1540px;height:910px;border:1px solid #6d6d6d;pointer-events:none"></div>
<svg class="a" style="left:0;top:0;pointer-events:none" width="1540" height="910" viewBox="0 0 1540 910">
<defs><filter id="sh" x="-20%" y="-20%" width="140%" height="140%"><feGaussianBlur in="SourceAlpha" stdDeviation="2.2"/><feOffset dx="1.5" dy="2.5" result="o"/><feComponentTransfer><feFuncA type="linear" slope="0.45"/></feComponentTransfer><feMerge><feMergeNode/><feMergeNode in="SourceGraphic"/></feMerge></filter></defs>
<g filter="url(#sh)"><path d="M364.5 196.5 L592.0 448.8" stroke="#09ab8c" stroke-width="9.5" stroke-linecap="round" fill="none"/><path d="M610.7 469.6 L579.5 457.4 L601.8 437.3 Z" fill="#09ab8c"/></g>
<g filter="url(#sh)"><path d="M619.0 522.0 L591.4 557.6" stroke="#09ab8c" stroke-width="10" stroke-linecap="round" fill="none"/><path d="M574.2 579.7 L580.8 546.8 L604.4 565.2 Z" fill="#09ab8c"/></g>
<rect x="600" y="482.5" width="262.5" height="24" fill="none" stroke="#09ab8c" stroke-width="3"/>
<g fill="none" stroke="#787676" stroke-width="1.4"><rect x="1450.5" y="230.500" width="46.500" height="46.500" rx="1.500"/><path d="M1462.300 230.500 V277 M1485.200 230.500 V277 M1450.500 241.800 H1497 M1450.500 264.500 H1497"/></g>
<text x="1474.300" y="258" text-anchor="middle" font-size="7.500" font-weight="bold" fill="#e83030" font-family="Liberation Sans, sans-serif">+X</text>
<path d="M939 773.600 H964" stroke="#0e0" stroke-width="1.800"/><path d="M971 773.600 L962.500 770.500 V776.700 Z" fill="#0d0"/>
<path d="M939 773.600 V799" stroke="#00008b" stroke-width="1.800"/><path d="M939 806.200 L935.800 797.500 H942.200 Z" fill="#00008b"/>
<circle cx="939" cy="773.600" r="3" fill="#f4e010"/>
<text x="975.800" y="777" font-size="9.500" fill="#0c0" font-family="Liberation Sans, sans-serif">Y</text>
<text x="935.800" y="817" font-size="9.500" fill="#00008b" font-family="Liberation Sans, sans-serif">Z</text>
</svg>
</body></html>
